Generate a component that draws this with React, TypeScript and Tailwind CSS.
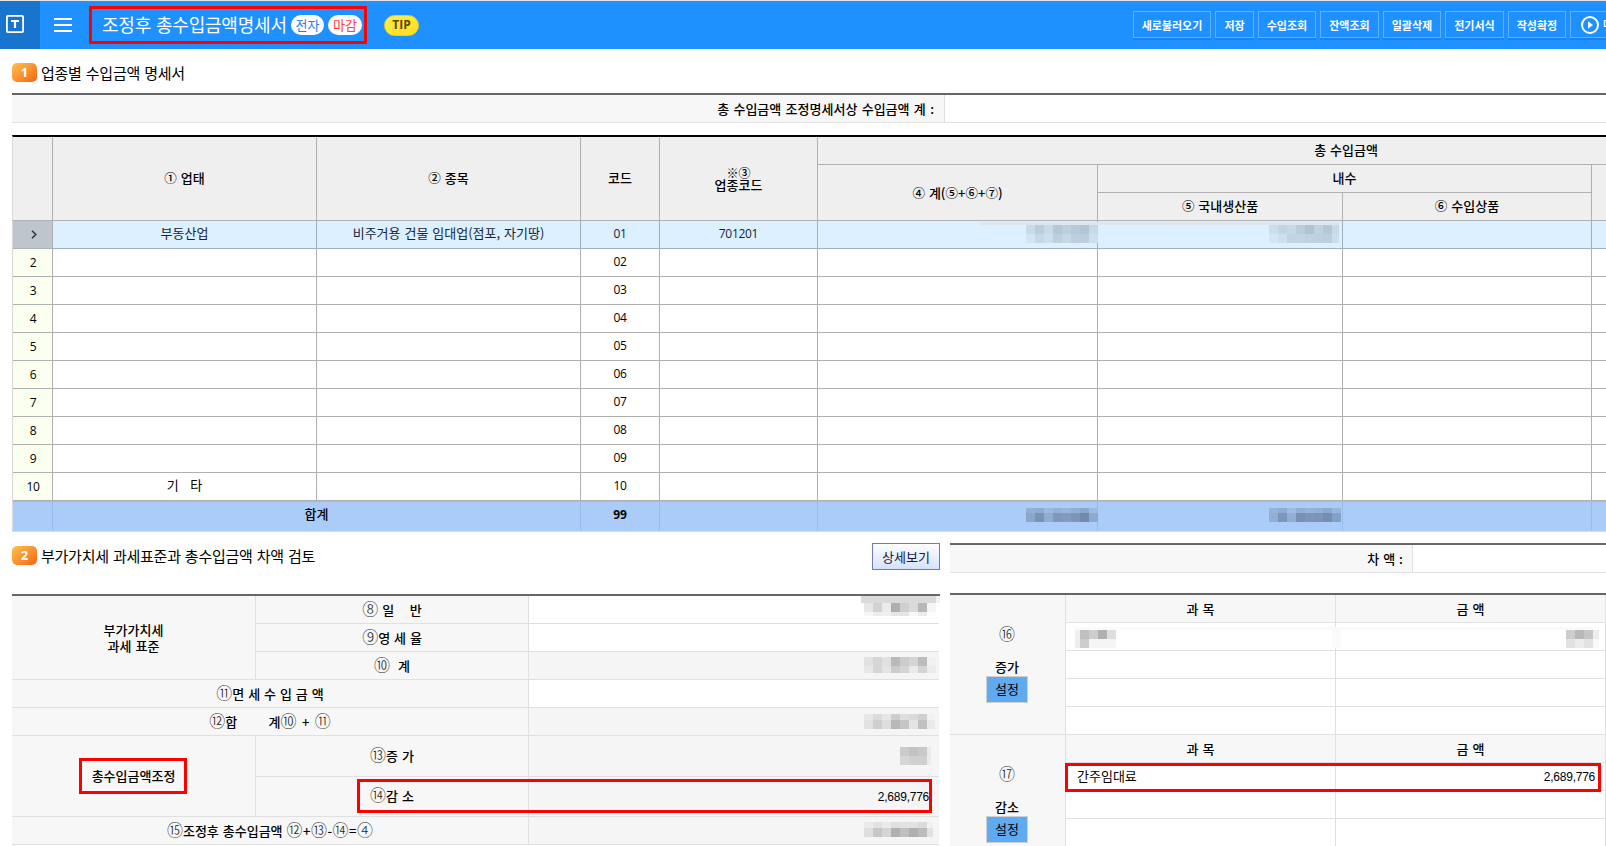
import type { ReactNode } from 'react'

const toolbar = [
  { label: '새로불러오기', width: 'w-[78px]' },
  { label: '저장', width: 'w-[39px]' },
  { label: '수입조회', width: 'w-[58px]' },
  { label: '잔액조회', width: 'w-[59px]' },
  { label: '일괄삭제', width: 'w-[58px]' },
  { label: '전기서식', width: 'w-[59px]' },
  { label: '작성확정', width: 'w-[58px]' },
]

const rows = [
  { type: '부동산업', item: '비주거용 건물 임대업(점포, 자기땅)', code: '01', biz: '701201' },
  { code: '02' },
  { code: '03' },
  { code: '04' },
  { code: '05' },
  { code: '06' },
  { code: '07' },
  { code: '08' },
  { code: '09' },
  { type: '기   타', code: '10' },
]

interface MosaicProps {
  x: number
  y: number
  heights: number[]
  widths: number[]
  colors: string[][]
}

// Pixelated block that hides an amount
function Mosaic({ x, y, heights, widths, colors }: MosaicProps) {
  return (
    <div className="absolute" style={{ left: x, top: y }}>
      {colors.map((line, r) => (
        <div key={r} className="flex">
          {line.map((color, c) => (
            <i key={c} style={{ width: widths[c], height: heights[r], background: color }} />
          ))}
        </div>
      ))}
    </div>
  )
}

const w8 = [9, 9, 9, 9, 9, 9, 9, 9]

const mosaics: MosaicProps[] = [
  { x: 980, y: 222, heights: [3], widths: [359], colors: [['#dde5ee']] },
  { x: 1026, y: 225, heights: [9, 9], widths: w8, colors: [
    ['#c8dbe9', '#bbcddb', '#c8dae8', '#b5c8d6', '#bccfdd', '#b8cad9', '#b3c5d4', '#c7d9e7'],
    ['#d2e5f4', '#c5d8e6', '#cddfed', '#bdd0de', '#c6d8e6', '#bdcfde', '#bccedd', '#cddfee'],
  ] },
  { x: 1269, y: 225, heights: [9, 9], widths: [9, 9, 9, 9, 9, 9, 9, 7], colors: [
    ['#cbdeed', '#c2d5e3', '#c6d9e7', '#bacddb', '#b0c3d1', '#c0d3e1', '#b5c8d7', '#c7dae8'],
    ['#d3e6f5', '#cde0ef', '#c1d4e2', '#c2d5e4', '#c0d3e1', '#bed1e0', '#bbcfdd', '#cbdeed'],
  ] },
  { x: 1026, y: 508, heights: [5, 9], widths: w8, colors: [
    ['#93afd4', '#91acd1', '#9cb8df', '#94b0d7', '#98b4db', '#92aed5', '#8ba6cc', '#9dbae2'],
    ['#8ba6ca', '#7a93b5', '#90acd2', '#7e98bd', '#829cc1', '#7d97bb', '#728aab', '#8ea9cf'],
  ] },
  { x: 1269, y: 508, heights: [5, 9], widths: w8, colors: [
    ['#97b3d9', '#91acd2', '#9fbbe3', '#92aed4', '#98b3da', '#94b0d7', '#8da9cf', '#99b6dd'],
    ['#92aed3', '#7c96ba', '#92aed4', '#7890b3', '#7d97ba', '#7b95b8', '#758eb0', '#84a0c6'],
  ] },
  { x: 861, y: 596, heights: [7], widths: [75, 4], colors: [['#dadada', '#f1f1f1']] },
  { x: 864, y: 603, heights: [9, 4], widths: w8, colors: [
    ['#e7e7e7', '#d2d2d2', '#ebebeb', '#aeaeae', '#cfcfcf', '#dadada', '#b7b7b7', '#f5f5f5'],
    ['#f6f6f6', '#ececec', '#efefef', '#e6e6e6', '#e4e4e4', '#f7f7f7', '#ececec', '#fbfbfb'],
  ] },
  { x: 864, y: 657, heights: [9, 7], widths: w8, colors: [
    ['#e2e2e2', '#d6d6d6', '#e0e0e0', '#b9b9b9', '#cccccc', '#d5d5d5', '#bcbcbc', '#f1f1f1'],
    ['#e8e8e8', '#d5d5d5', '#e4e4e4', '#cbcbcb', '#d4d4d4', '#eaeaea', '#d4d4d4', '#ececec'],
  ] },
  { x: 864, y: 714, heights: [6, 9], widths: [9, 9, 9, 9, 9, 9, 9, 8], colors: [
    ['#e8e8e8', '#dcdcdc', '#e6e6e6', '#cdcdcd', '#dfdfdf', '#dadada', '#d0d0d0', '#f1f1f1'],
    ['#e2e2e2', '#cfcfcf', '#dedede', '#b8b8b8', '#c5c5c5', '#e4e4e4', '#c0c0c0', '#eaeaea'],
  ] },
  { x: 900, y: 747, heights: [9, 9], widths: [9, 9, 9, 4], colors: [
    ['#cbcbcb', '#c2c2c2', '#c9c9c9', '#eaeaea'],
    ['#d6d6d6', '#d0d0d0', '#cfcfcf', '#ebebeb'],
  ] },
  { x: 864, y: 822, heights: [6, 9], widths: [9, 9, 9, 9, 9, 9, 9, 6], colors: [
    ['#ebebeb', '#e2e2e2', '#eaeaea', '#dfdfdf', '#e2e2e2', '#e2e2e2', '#dbdbdb', '#f1f1f1'],
    ['#dfdfdf', '#c6c6c6', '#d5d5d5', '#b0b0b0', '#c0c0c0', '#b0b0b0', '#bcbcbc', '#e2e2e2'],
  ] },
  { x: 1075, y: 627, heights: [3], widths: [524], colors: [['#fafafa']] },
  { x: 1332, y: 627, heights: [21], widths: [9], colors: [['#fafafa']] },
  { x: 1075, y: 630, heights: [9, 9], widths: [5, 9, 9, 9, 9], colors: [
    ['#efefef', '#c0c0c0', '#cdcdcd', '#b0b0b0', '#dedede'],
    ['#eeeeee', '#cccccc', '#f5f5f5', '#f5f5f5', '#f5f5f5'],
  ] },
  { x: 1566, y: 630, heights: [9, 9], widths: [9, 9, 9, 6], colors: [
    ['#cdcdcd', '#b8b8b8', '#c6c6c6', '#ededed'],
    ['#e2e2e2', '#ececec', '#e2e2e2', '#f9f9f9'],
  ] },
]

function SectionTitle({ no, children }: { no: string; children: ReactNode }) {
  return (
    <div className="flex items-start">
      <span className="flex h-[19px] w-[25px] items-center justify-center rounded-[5px] bg-gradient-to-br from-[#ffc14d] to-[#f2620f] font-['Open_Sans'] text-[13px] leading-none font-bold text-white">
        {no}
      </span>
      <h2 className="ml-1 text-[15px] leading-[20px] tracking-[-0.24px] text-black">{children}</h2>
    </div>
  )
}

// Large thin circled number used in the lower forms
function No({ children }: { children: string }) {
  return <span className="pb-[3px] text-[16px] leading-none font-light text-[#222]">{children}</span>
}

// Small circled number used in the table head
function Sm({ children }: { children: string }) {
  return <span className="text-[12.5px]">{children}</span>
}

function HeadCell({ className, children }: { className?: string; children?: ReactNode }) {
  return (
    <div className={`flex items-center justify-center border-r border-b border-[#b0b0b0] bg-[#efefef] text-center font-medium ${className ?? 'pb-[2px]'}`}>
      {children}
    </div>
  )
}

function FormCell({ className, children }: { className?: string; children?: ReactNode }) {
  return (
    <div className={`flex items-center justify-center border-r border-b border-[#e0e0e0] bg-[#f7f7f7] text-center font-medium whitespace-pre ${className ?? ''}`}>
      {children}
    </div>
  )
}

function ValueCell({ className, children }: { className?: string; children?: ReactNode }) {
  return <div className={`flex items-center border-b border-[#e0e0e0] ${className ?? 'bg-white'}`}>{children}</div>
}

function SideCell({ no, label }: { no: string; label: string }) {
  return (
    <div className="row-span-5 flex flex-col items-center border-r border-b border-[#e0e0e0] bg-[#f7f7f7] pt-[29px] pr-px">
      <div className="flex h-5 items-center"><No>{no}</No></div>
      <div className="mt-[15px] leading-4 font-medium">{label}</div>
      <button className="mt-px h-[27px] w-[42px] border border-[#cfcfcf] bg-[#5faaf1] pb-[2px] leading-none">설정</button>
    </div>
  )
}

function Amount() {
  return <span className="font-['Liberation_Sans'] text-[12px] tracking-[-0.25px]">2,689,776</span>
}

function AccountBlock({ no, label, filled }: { no: string; label: string; filled?: boolean }) {
  const cell = 'flex items-center border-r border-b border-[#e0e0e0] bg-white'
  return (
    <>
      <SideCell no={no} label={label} />
      <FormCell>과 목</FormCell>
      <FormCell>금 액</FormCell>
      {[0, 1, 2, 3].map((i) => (
        <div key={i} className="contents">
          <div className={`${cell} pb-px pl-[11px]`}>{filled && i === 0 && <span>간주임대료</span>}</div>
          <div className={`${cell} justify-end pr-[10px]`}>{filled && i === 0 && <Amount />}</div>
        </div>
      ))}
    </>
  )
}

function Header() {
  return (
    <header className="flex h-[49px] items-center border-t border-[#e4e4e4] bg-[#1e90ff] text-white">
      <div className="flex h-12 w-10 shrink-0 items-center bg-[#1874cd] pb-[2px] pl-[6px]">
        <svg width="18" height="18" viewBox="0 0 18 18" fill="none" stroke="white">
          <rect x="0.9" y="0.9" width="16.2" height="16.2" rx="1" strokeWidth="1.8" />
          <path d="M5 6h8M9 6v7" strokeWidth="2.2" />
        </svg>
      </div>
      <div className="ml-[14px] flex w-[18px] shrink-0 flex-col gap-1">
        <i className="h-[2px] bg-white" />
        <i className="h-[2px] bg-white" />
        <i className="h-[2px] bg-white" />
      </div>
      <h1 className="ml-[30px] w-[189px] shrink-0 pb-[2px] text-[18px] tracking-[-0.2px] whitespace-nowrap">조정후 총수입금액명세서</h1>
      <span className="flex h-5 w-[33px] shrink-0 items-center justify-center rounded-full bg-white pb-px text-[13px] leading-none text-[#1e80e8]">전자</span>
      <span className="ml-1 flex h-5 w-[34px] shrink-0 items-center justify-center rounded-full bg-white pb-px text-[13px] leading-none text-[#ff4040]">마감</span>
      <span className="ml-[22px] flex h-[21px] w-[35px] shrink-0 items-center justify-center rounded-full border border-[#f0cf10] bg-gradient-to-br from-[#fff04a] to-[#ffdc10] font-['Open_Sans'] text-[12px] leading-none font-bold text-[#5a4708]">
        TIP
      </span>
      <div className="mt-[-1px] ml-[714px] flex shrink-0 gap-1">
        {toolbar.map((b) => (
          <button key={b.label} className={`h-[27px] shrink-0 border border-[#62b2ff] pt-[2px] text-[11px] leading-none font-bold shadow-[0_2px_0_#1a82e8] ${b.width}`}>
            {b.label}
          </button>
        ))}
        <button className="flex h-[27px] w-[90px] shrink-0 items-center border border-[#62b2ff] pl-[10px] text-[11px] leading-none font-medium shadow-[0_2px_0_#1a82e8]">
          <svg width="18" height="18" viewBox="0 0 18 18" fill="none">
            <circle cx="9" cy="9" r="8" stroke="white" strokeWidth="2" />
            <path d="M7 5.2v7.6L12 9z" fill="white" />
          </svg>
          <span className="ml-1">마감</span>
        </button>
      </div>
    </header>
  )
}

function IncomeTable() {
  const cols = 'grid grid-cols-[40px_264px_264px_79px_158px_280px_245px_249px_283px]'
  const digits = "font-['Open_Sans'] text-[12px] tracking-[-0.3px]"
  return (
    <div className="w-[1863px] border-t-2 border-l border-t-black border-l-[#d8d8d8]">
      <div className={`${cols} grid-rows-[28px_28px_28px]`}>
        <HeadCell className="row-span-3" />
        <HeadCell className="row-span-3 pb-[2px]"><span><Sm>①</Sm> 업태</span></HeadCell>
        <HeadCell className="row-span-3 pb-[2px]"><span><Sm>②</Sm> 종목</span></HeadCell>
        <HeadCell className="row-span-3 pb-[2px]">코드</HeadCell>
        <HeadCell className="row-span-3 flex-col">
          <div className="h-3 text-[12px] leading-[12px]">※③</div>
          <div className="h-3 leading-[12px]">업종코드</div>
        </HeadCell>
        <HeadCell className="col-span-4 pb-[2px]">총 수입금액</HeadCell>
        <HeadCell className="row-span-2"><span><Sm>④</Sm> 계(<Sm>⑤</Sm>+<Sm>⑥</Sm>+<Sm>⑦</Sm>)</span></HeadCell>
        <HeadCell className="col-span-2 pb-[2px]">내수</HeadCell>
        <HeadCell className="row-span-2" />
        <HeadCell><span><Sm>⑤</Sm> 국내생산품</span></HeadCell>
        <HeadCell><span><Sm>⑥</Sm> 수입상품</span></HeadCell>
      </div>
      {rows.map((row, i) => {
        const cell = `flex items-center justify-center border-r border-b whitespace-pre ${i === 0 ? 'border-[#9fb0be] bg-[#dcf0ff] text-[#14243a]' : 'border-[#b0b0b0] bg-white'}`
        return (
          <div key={row.code} className={`${cols} h-7`}>
            <div className={`flex items-center justify-center border-r border-b border-[#b0b0b0] pl-px ${digits} ${i === 0 ? 'bg-[#bec5cd]' : 'bg-[#faffef]'}`}>
              {i === 0 ? (
                <svg width="6" height="9" viewBox="0 0 6 9" className="ml-[2px]" fill="none" stroke="#333" strokeWidth="1.5">
                  <path d="M1 0.8L4.8 4.5L1 8.2" />
                </svg>
              ) : i + 1}
            </div>
            <div className={`${cell} pb-[3px]`}>{row.type}</div>
            <div className={`${cell} pb-[3px]`}>{row.item}</div>
            <div className={`${cell} ${digits} pb-px`}>{row.code}</div>
            <div className={`${cell} ${digits} pb-px`}>{row.biz}</div>
            <div className={cell} />
            <div className={cell} />
            <div className={cell} />
            <div className={cell} />
          </div>
        )
      })}
      <div className={`${cols} h-[31px] border-b border-[#d8dce2] bg-[#abccf9] [&>div]:flex [&>div]:items-center [&>div]:justify-center [&>div]:border-t [&>div]:border-r [&>div]:border-[#97bcec]`}>
        <div />
        <div className="col-span-2 pb-[5px] font-medium">합계</div>
        <div className="pb-[3px] font-['Open_Sans'] text-[12px] font-bold">99</div>
        <div />
        <div />
        <div />
        <div />
        <div />
      </div>
    </div>
  )
}

export default function App() {
  return (
    <div className="relative h-[846px] w-[1606px] overflow-hidden bg-white font-['Noto_Sans_CJK_KR',sans-serif] text-[13px] text-black [word-spacing:1px]">
      <Header />
      <div className="pl-3">
        <div className="h-11 pt-[14px]">
          <SectionTitle no="1">업종별 수입금액 명세서</SectionTitle>
        </div>
        <div className="flex h-[30px] border-t-2 border-b border-t-[#666] border-b-[#e0e0e0]">
          <div className="flex w-[933px] items-center justify-end border-r border-[#e0e0e0] bg-[#f7f7f7] pr-[10px] font-medium [word-spacing:1.4px]">
            총 수입금액 조정명세서상 수입금액 계 :
          </div>
        </div>
        <div className="mt-3">
          <IncomeTable />
        </div>

        <div className="flex">
          <section className="w-[928px]">
            <div className="flex h-[62px] justify-between pt-[11px]">
              <div className="pt-[3px]">
                <SectionTitle no="2">부가가치세 과세표준과 총수입금액 차액 검토</SectionTitle>
              </div>
              <button className="h-[27px] w-[68px] border border-[#6a7fb0] bg-gradient-to-b from-[#fdfdff] to-[#d6e2fc] leading-none text-[#16203c]">
                상세보기
              </button>
            </div>
            <div className="border-t-2 border-[#666]">
              <div className="grid w-[927px] grid-cols-[244px_273px_410px] grid-rows-[28px_28px_28px_28px_28px_41px_40px_28px]">
                <FormCell className="row-span-3 leading-4">{'부가가치세\n과세 표준'}</FormCell>
                <FormCell><No>⑧</No>{' 일    반'}</FormCell>
                <ValueCell />
                <FormCell><No>⑨</No>영 세 율</FormCell>
                <ValueCell />
                <FormCell><No>⑩</No>{'  계'}</FormCell>
                <ValueCell className="bg-[#f5f5f5]" />
                <FormCell className="col-span-2"><No>⑪</No>면 세 수 입 금 액</FormCell>
                <ValueCell />
                <FormCell className="col-span-2"><No>⑫</No>{'합        계'}<No>⑩</No><span className="px-[1.5px]">{' + '}</span><No>⑪</No></FormCell>
                <ValueCell className="bg-[#f5f5f5]" />
                <FormCell className="row-span-2">총수입금액조정</FormCell>
                <FormCell className="pb-px"><No>⑬</No>증 가</FormCell>
                <ValueCell className="bg-[#f5f5f5]" />
                <FormCell className="pb-[2px]"><No>⑭</No>감 소</FormCell>
                <ValueCell className="justify-end bg-[#f5f5f5] pr-[10px]"><Amount /></ValueCell>
                <FormCell className="col-span-2">
                  <No>⑮</No>{'조정후 총수입금액 '}<No>⑫</No><span className="px-[0.5px]">+</span><No>⑬</No><span className="px-[0.5px]">-</span><No>⑭</No><span className="px-[0.5px]">=</span><No>④</No>
                </FormCell>
                <ValueCell className="bg-[#f5f5f5]" />
              </div>
            </div>
          </section>

          <section className="ml-[10px] w-[656px] pt-[11px]">
            <div className="flex h-[30px] border-t-2 border-b border-t-[#666] border-b-[#e0e0e0]">
              <div className="flex w-[463px] items-center justify-end border-r border-[#e0e0e0] bg-[#f7f7f7] pr-[9px] font-medium">
                차 액 :
              </div>
            </div>
            <div className="mt-5 border-t-2 border-[#666]">
              <div className="grid auto-rows-[28px] grid-cols-[116px_270px_270px]">
                <AccountBlock no="⑯" label="증가" />
                <AccountBlock no="⑰" label="감소" filled />
              </div>
            </div>
          </section>
        </div>
      </div>

      {mosaics.map((m, i) => (
        <Mosaic key={i} {...m} />
      ))}

      {/* highlight boxes */}
      <div className="absolute top-[6px] left-[89px] h-[38px] w-[278px] border-3 border-[#f00]" />
      <div className="absolute top-[758px] left-[79px] h-[36px] w-[108px] border-3 border-[#f00]" />
      <div className="absolute top-[779px] left-[357px] h-[34px] w-[575px] border-3 border-[#f00]" />
      <div className="absolute top-[763px] left-[1065px] h-[29px] w-[536px] border-3 border-[#f00]" />
    </div>
  )
}
